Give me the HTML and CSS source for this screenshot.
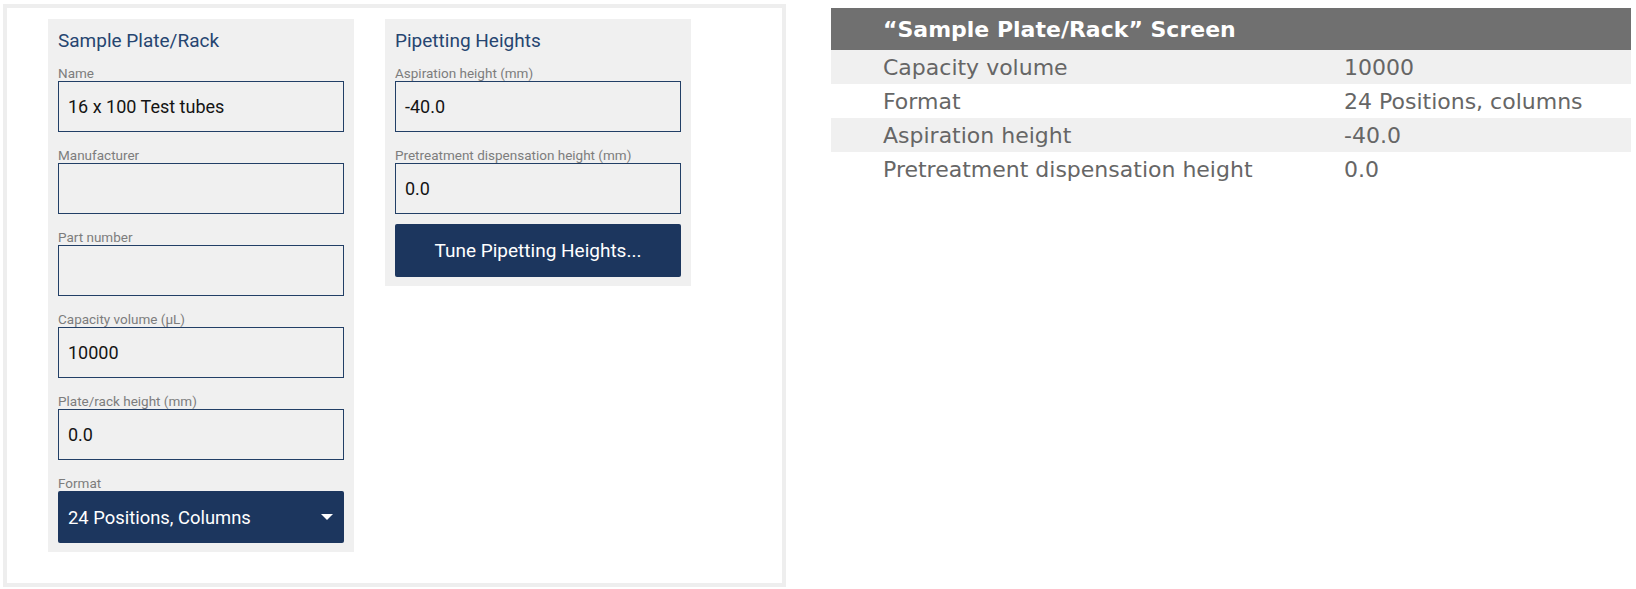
FILE: index.html
```html
<!DOCTYPE html>
<html>
<head>
<meta charset="utf-8">
<link rel="stylesheet" href="styles.css">
</head>
<body>
<div class="page">
  <div class="frame">
    <div class="panel">
      <div class="panel-title">Sample Plate/Rack</div>
      <div class="field">
        <div class="label">Name</div>
        <div class="input">16 x 100 Test tubes</div>
      </div>
      <div class="field">
        <div class="label">Manufacturer</div>
        <div class="input"></div>
      </div>
      <div class="field">
        <div class="label">Part number</div>
        <div class="input"></div>
      </div>
      <div class="field">
        <div class="label">Capacity volume (µL)</div>
        <div class="input">10000</div>
      </div>
      <div class="field">
        <div class="label">Plate/rack height (mm)</div>
        <div class="input">0.0</div>
      </div>
      <div class="field">
        <div class="label">Format</div>
        <div class="select">
          <span>24 Positions, Columns</span>
          <svg class="caret" width="12" height="6" viewBox="0 0 12 6"><path d="M0 0 L12 0 L6 6 Z" fill="#ffffff"/></svg>
        </div>
      </div>
    </div>
    <div class="panel">
      <div class="panel-title">Pipetting Heights</div>
      <div class="field">
        <div class="label">Aspiration height (mm)</div>
        <div class="input">-40.0</div>
      </div>
      <div class="field">
        <div class="label">Pretreatment dispensation height (mm)</div>
        <div class="input">0.0</div>
      </div>
      <div class="button">Tune Pipetting Heights...</div>
    </div>
  </div>
  <div class="table">
    <div class="thead">“Sample Plate/Rack” Screen</div>
    <div class="row stripe"><div class="cell key">Capacity volume</div><div class="cell">10000</div></div>
    <div class="row"><div class="cell key">Format</div><div class="cell">24 Positions, columns</div></div>
    <div class="row stripe"><div class="cell key">Aspiration height</div><div class="cell">-40.0</div></div>
    <div class="row"><div class="cell key">Pretreatment dispensation height</div><div class="cell">0.0</div></div>
  </div>
</div>
</body>
</html>
```
FILE: styles.css
```css
* { box-sizing: border-box; }
html, body { margin: 0; padding: 0; background: #ffffff; }
.page {
  display: flex;
  align-items: flex-start;
  padding: 4px 0 0 3px;
}
.frame {
  width: 783px;
  height: 583px;
  border: 4px solid #eeeeee;
  padding: 11px 0 0 41px;
  display: flex;
  align-items: flex-start;
  gap: 31px;
  font-family: "Roboto", "Open Sans", sans-serif;
}
.panel {
  width: 306px;
  background: #f0f0f0;
  padding: 10px 10px 9px 10px;
}
.panel-title {
  font-size: 19px;
  line-height: 24px;
  color: #264570;
  margin-bottom: 12px;
}
.field + .field { margin-top: 15px; }
.label {
  font-size: 13.5px;
  line-height: 16px;
  color: #7d7d7d;
}
.input {
  height: 51px;
  border: 1px solid #223f66;
  padding: 0 9px;
  display: flex;
  align-items: center;
  font-size: 18px;
  color: #141414;
}
.select {
  height: 52px;
  background: #1c365e;
  color: #ffffff;
  border-radius: 2px;
  padding: 0 11px 0 10px;
  display: flex;
  align-items: center;
  justify-content: space-between;
  font-size: 18.4px;
}
.caret { display: block; }
.button {
  margin-top: 10px;
  height: 53px;
  background: #1c365e;
  color: #ffffff;
  border-radius: 2px;
  display: flex;
  align-items: center;
  justify-content: center;
  font-size: 19px;
}
.table {
  width: 800px;
  margin: 4px 0 0 45px;
  font-family: "DejaVu Sans", Verdana, sans-serif;
  font-size: 22px;
}
.thead {
  height: 42px;
  background: #707070;
  color: #ffffff;
  font-weight: bold;
  padding-left: 52px;
  display: flex;
  align-items: center;
}
.row {
  display: flex;
  height: 34px;
  align-items: center;
  color: #666666;
}
.row.stripe { background: #f0f0f0; }
.cell.key { width: 513px; padding-left: 52px; }
```
